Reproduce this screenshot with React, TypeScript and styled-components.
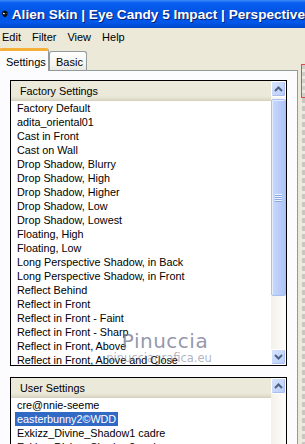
import React from 'react';
import styled, { createGlobalStyle } from 'styled-components';

const GlobalStyle = createGlobalStyle`
  body {
    margin: 0;
    background: #ece9d8;
    font-family: "Liberation Sans", Arial, sans-serif;
  }
`;

const factoryItems: string[] = [
  'Factory Default',
  'adita_oriental01',
  'Cast in Front',
  'Cast on Wall',
  'Drop Shadow, Blurry',
  'Drop Shadow, High',
  'Drop Shadow, Higher',
  'Drop Shadow, Low',
  'Drop Shadow, Lowest',
  'Floating, High',
  'Floating, Low',
  'Long Perspective Shadow, in Back',
  'Long Perspective Shadow, in Front',
  'Reflect Behind',
  'Reflect in Front',
  'Reflect in Front - Faint',
  'Reflect in Front - Sharp',
  'Reflect in Front, Above',
  'Reflect in Front, Above and Close',
];

const userItems: string[] = [
  'cre@nnie-seeme',
  'easterbunny2©WDD',
  'Exkizz_Divine_Shadow1 cadre',
  'Exkizz_Divine_Shadow2 cadre',
];

const menus = ['Edit', 'Filter', 'View', 'Help'];

function Chevron({ up }: { up?: boolean }): React.ReactElement {
  return (
    <svg width="9" height="6" viewBox="0 0 9 6">
      <path
        d={up ? 'M1 5 L4.5 1.5 L8 5' : 'M1 1 L4.5 4.5 L8 1'}
        fill="none"
        stroke="#4d6185"
        strokeWidth="2"
      />
    </svg>
  );
}

function AppIcon(): React.ReactElement {
  return (
    <svg width="12" height="14" viewBox="0 0 12 14">
      <path d="M6 0.5 C10 0.5 11.8 3 11.5 6.5 C11.2 10 8.5 13.5 6 13.5 C3.5 13.5 0.8 10 0.5 6.5 C0.2 3 2 0.5 6 0.5 Z" fill="#0a0a0a" />
      <ellipse cx="4" cy="6" rx="2.2" ry="1.4" fill="#ffffff" transform="rotate(25 4 6)" />
      <ellipse cx="8.6" cy="6.2" rx="1.6" ry="1.1" fill="#5a5a5a" transform="rotate(-25 8.6 6.2)" />
    </svg>
  );
}

interface ListProps {
  title: string;
  items: string[];
  selected?: number;
  height: number;
  full?: boolean;
}

function SettingsList({ title, items, selected, height, full }: ListProps): React.ReactElement {
  return (
    <ListBox $height={height}>
      <ListMain>
        <ListHeader>{title}</ListHeader>
        {items.map((item, index) => (
          <ListRow key={index}>
            <RowLabel $selected={index === selected}>{item}</RowLabel>
          </ListRow>
        ))}
      </ListMain>
      <ScrollBar>
        <ScrollButton>
          <Chevron up />
        </ScrollButton>
        {full ? (
          <>
            <Thumb>
              <Grip />
            </Thumb>
            <Track />
            <ScrollButton>
              <Chevron />
            </ScrollButton>
          </>
        ) : (
          <Track />
        )}
      </ScrollBar>
    </ListBox>
  );
}

export default function App(): React.ReactElement {
  return (
    <Window>
      <GlobalStyle />
      <TitleBar>
        <AppIcon />
        <TitleText>Alien Skin | Eye Candy 5 Impact | Perspective</TitleText>
      </TitleBar>
      <MenuBar>
        {menus.map((m) => (
          <MenuItem key={m}>{m}</MenuItem>
        ))}
      </MenuBar>
      <Body>
        <TabArea>
          <TabStrip>
            <Tab $active>Settings</Tab>
            <Tab>Basic</Tab>
          </TabStrip>
          <TabPanel>
            <SettingsList title="Factory Settings" items={factoryItems} height={286} full />
            <SettingsList title="User Settings" items={userItems} selected={1} height={120} />
            <Watermark>
              <WatermarkName>Pinuccia</WatermarkName>
              <WatermarkSite>pinucciagrafica.eu</WatermarkSite>
            </Watermark>
          </TabPanel>
        </TabArea>
        <SideStrip>
          <PreviewCorner />
          <PreviewEdge />
        </SideStrip>
      </Body>
    </Window>
  );
}

const Window = styled.div`
  width: 305px;
  height: 444px;
  overflow: hidden;
  background: #ece9d8;
  display: flex;
  flex-direction: column;
`;

const TitleBar = styled.div`
  height: 28px;
  flex-shrink: 0;
  display: flex;
  align-items: center;
  gap: 4px;
  padding-left: 2px;
  background: linear-gradient(
    to bottom,
    #3c8cf8 0%,
    #0a5ef0 10%,
    #0054e3 45%,
    #0058ea 80%,
    #0046c8 100%
  );
  white-space: nowrap;
  overflow: hidden;
`;

const TitleText = styled.span`
  color: #ffffff;
  font-weight: 700;
  font-size: 13.6px;
  text-shadow: 1px 1px 0 #0a1e6e;
`;

const MenuBar = styled.div`
  height: 18px;
  flex-shrink: 0;
  display: flex;
  align-items: center;
  padding-left: 2px;
  gap: 11px;
`;

const MenuItem = styled.span`
  font-size: 11px;
  color: #000000;
`;

const Body = styled.div`
  flex: 1;
  display: flex;
  min-height: 0;
`;

const TabArea = styled.div`
  width: 298px;
  display: flex;
  flex-direction: column;
`;

const TabStrip = styled.div`
  height: 24px;
  display: flex;
  align-items: flex-end;
  flex-shrink: 0;
`;

const Tab = styled.div<{ $active?: boolean }>`
  box-sizing: border-box;
  height: ${(p) => (p.$active ? '23px' : '19px')};
  padding: ${(p) => (p.$active ? '3px 6px 0 6px' : '2px 6px 0 6px')};
  width: ${(p) => (p.$active ? '50px' : '38px')};
  font-size: 11px;
  line-height: 16px;
  color: #000000;
  border: 1px solid #919b9c;
  border-bottom: none;
  border-radius: 3px 3px 0 0;
  background: ${(p) =>
    p.$active ? '#fcfcfe' : 'linear-gradient(to bottom, #ffffff, #f3f3ef 70%, #e9e8e2)'};
  border-top: ${(p) => (p.$active ? '3px solid #f6b03a' : '1px solid #919b9c')};
  margin-bottom: ${(p) => (p.$active ? '-1px' : '0')};
  position: relative;
  z-index: ${(p) => (p.$active ? 1 : 0)};
  margin-left: ${(p) => (p.$active ? '-1px' : '0')};
`;

const TabPanel = styled.div`
  position: relative;
  flex: 1;
  background: #fcfcfe;
  border-top: 1px solid #919b9c;
  border-right: 1px solid #919b9c;
  padding: 9px 0 0 10px;
  display: flex;
  flex-direction: column;
  gap: 11px;
`;

const ListBox = styled.div<{ $height: number }>`
  box-sizing: border-box;
  width: 277px;
  height: ${(p) => p.$height}px;
  flex-shrink: 0;
  border: 1px solid #000000;
  background: #ffffff;
  display: flex;
  overflow: hidden;
`;

const ListMain = styled.div`
  flex: 1;
  display: flex;
  flex-direction: column;
  overflow: hidden;
`;

const ListHeader = styled.div`
  box-sizing: border-box;
  height: 20px;
  flex-shrink: 0;
  padding-left: 9px;
  font-size: 10.8px;
  line-height: 20px;
  color: #000000;
  background: linear-gradient(to bottom, #ebeadb 0%, #ebe9d9 80%, #dcd9c6 100%);
  border-bottom: 1px solid #d6d2c2;
`;

const ListRow = styled.div`
  height: 14px;
  flex-shrink: 0;
  padding-left: 4px;
  display: flex;
  white-space: nowrap;
`;

const RowLabel = styled.span<{ $selected?: boolean }>`
  font-size: 10.8px;
  line-height: 14px;
  padding: 0 2px;
  color: ${(p) => (p.$selected ? '#ffffff' : '#000000')};
  background: ${(p) => (p.$selected ? '#316ac5' : 'transparent')};
`;

const ScrollBar = styled.div`
  width: 15px;
  flex-shrink: 0;
  display: flex;
  flex-direction: column;
  background: #f6f5f0;
`;

const ScrollButton = styled.div`
  box-sizing: border-box;
  height: 16px;
  flex-shrink: 0;
  display: flex;
  align-items: center;
  justify-content: center;
  border: 1px solid #ffffff;
  border-radius: 2px;
  background: linear-gradient(to bottom right, #d6e3fd, #b9cdf8);
  box-shadow: inset -1px -1px 0 #a8bfee;
`;

const Thumb = styled.div`
  box-sizing: border-box;
  height: 197px;
  margin-top: 2px;
  flex-shrink: 0;
  display: flex;
  align-items: center;
  justify-content: center;
  border: 1px solid #a9c0ef;
  border-radius: 2px;
  background: linear-gradient(to right, #c9d9fc, #b8ccf8 60%, #adc4f6);
  box-shadow: inset 1px 1px 0 #e6eefe;
`;

const Grip = styled.div`
  width: 7px;
  height: 8px;
  background: repeating-linear-gradient(
    to bottom,
    #eef3fe 0 1px,
    #8ca7e8 1px 2px
  );
`;

const Track = styled.div`
  flex: 1;
  background: linear-gradient(to right, #f3f1ea, #fdfdfa);
`;

const Watermark = styled.div`
  position: absolute;
  left: 94px;
  top: 259px;
  width: 130px;
  display: flex;
  flex-direction: column;
  align-items: center;
  pointer-events: none;
`;

const WatermarkName = styled.span`
  font-family: "DejaVu Sans", Verdana, sans-serif;
  font-size: 20px;
  line-height: 22px;
  color: rgba(120, 124, 150, 0.8);
  letter-spacing: 0.5px;
  margin-left: 12px;
`;

const WatermarkSite = styled.span`
  font-family: "DejaVu Sans", Verdana, sans-serif;
  font-size: 11.5px;
  line-height: 13px;
  color: rgba(110, 114, 140, 0.55);
`;

const SideStrip = styled.div`
  flex: 1;
  display: flex;
  flex-direction: column;
  padding: 18px 0 0 3px;
`;

const PreviewCorner = styled.div`
  height: 32px;
  flex-shrink: 0;
  border: 1px solid #f0454a;
  border-right: none;
  background: repeating-linear-gradient(
    to bottom,
    #cfcfca 0 4px,
    #ebe9e1 4px 7px
  );
`;

const PreviewEdge = styled.div`
  flex: 1;
  margin-left: 1px;
  background: repeating-linear-gradient(
    to bottom,
    #c8c7c1 0 5px,
    #ebeae3 5px 8px
  );
`;
